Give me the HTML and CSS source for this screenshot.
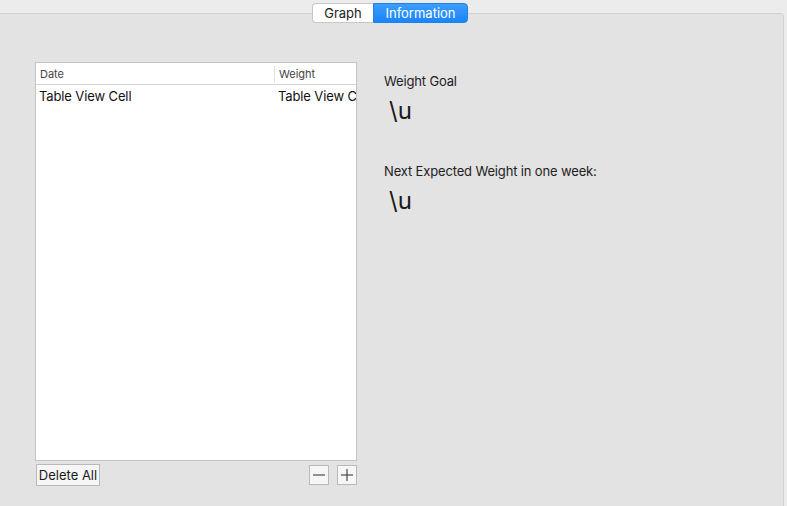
FILE: index.html
```html
<!DOCTYPE html>
<html>
<head>
<meta charset="utf-8">
<link rel="stylesheet" href="styles.css">
</head>
<body>
<div class="window">
  <div class="segmented">
    <div class="seg seg-off">Graph</div>
    <div class="seg seg-on">Information</div>
  </div>
  <div class="panel">
    <div class="left">
      <div class="table">
        <div class="thead">
          <div class="th th-date">Date</div>
          <div class="th th-weight">Weight</div>
        </div>
        <div class="row">
          <div class="td td-date">Table View Cell</div>
          <div class="td td-weight">Table View Cell</div>
        </div>
      </div>
      <div class="controls">
        <button class="btn delete">Delete All</button>
        <div class="pm">
          <button class="btn sq" aria-label="Remove"><svg width="12" height="12" viewBox="0 0 12 12"><line x1="0" y1="6" x2="12" y2="6" stroke="#2a2a2a" stroke-width="1"/></svg></button>
          <button class="btn sq" aria-label="Add"><svg width="12" height="12" viewBox="0 0 12 12"><line x1="0" y1="6" x2="12" y2="6" stroke="#2a2a2a" stroke-width="1"/><line x1="6" y1="0" x2="6" y2="12" stroke="#2a2a2a" stroke-width="1"/></svg></button>
        </div>
      </div>
    </div>
    <div class="right">
      <div class="label">Weight Goal</div>
      <div class="value">\u</div>
      <div class="label second">Next Expected Weight in one week:</div>
      <div class="value">\u</div>
    </div>
  </div>
</div>
</body>
</html>
```
FILE: styles.css
```css
html, body {
  margin: 0;
  padding: 0;
  background: #ececec;
  font-family: "Inter", "Liberation Sans", Arial, sans-serif;
  color: #1d1d1d;
}
.window {
  position: relative;
  width: 787px;
  height: 506px;
  overflow: hidden;
}
.segmented {
  position: absolute;
  top: 3px;
  left: 312px;
  display: flex;
  height: 20px;
  z-index: 2;
  font-size: 13px;
}
.seg {
  display: flex;
  align-items: center;
  justify-content: center;
  box-sizing: border-box;
  height: 20px;
}
.seg-off {
  width: 61px;
  background: #fff;
  border: 1px solid #c6c6c6;
  border-right: none;
  border-radius: 4px 0 0 4px;
  color: #222;
}
.seg-on {
  width: 95px;
  background: linear-gradient(#3c9dfb, #1a84fa);
  border: 1px solid #1b82f0;
  border-radius: 0 4px 4px 0;
  color: #fff;
}
.panel {
  margin-top: 13px;
  width: 784px;
  height: 493px;
  box-sizing: border-box;
  background: #e3e3e3;
  border-top: 1px solid #d0d0d0;
  border-right: 1px solid #d3d3d3;
  border-top-right-radius: 4px;
  display: flex;
  padding: 48px 0 0 35px;
  gap: 27px;
}
.left {
  width: 322px;
  display: flex;
  flex-direction: column;
}
.table {
  width: 322px;
  height: 399px;
  box-sizing: border-box;
  background: #fff;
  border: 1px solid #c4c4c4;
  overflow: hidden;
}
.thead {
  display: flex;
  height: 22px;
  box-sizing: border-box;
  border-bottom: 1px solid #d6d6d6;
  font-size: 11px;
  color: #444;
  align-items: center;
}
.th {
  box-sizing: border-box;
  white-space: nowrap;
}
.th-date {
  width: 239px;
  padding-left: 4px;
  height: 16px;
  line-height: 16px;
  border-right: 1px solid #dedede;
}
.th-weight {
  padding-left: 4px;
}
.row {
  display: flex;
  height: 21px;
  align-items: center;
  font-size: 13px;
  letter-spacing: -0.12px;
  color: #111;
  white-space: nowrap;
}
.td-date {
  width: 239px;
  padding-left: 3px;
  box-sizing: border-box;
}
.td-weight {
  padding-left: 3px;
  overflow: hidden;
  width: 81px;
  box-sizing: border-box;
}
.controls {
  display: flex;
  justify-content: space-between;
  align-items: flex-start;
  margin-top: 3px;
}
.btn {
  font-family: "Inter", "Liberation Sans", Arial, sans-serif;
  font-size: 13px;
  color: #1a1a1a;
  background: #f6f6f6;
  border: 1px solid #b9b9b9;
  padding: 0;
  margin: 0;
  box-sizing: border-box;
  border-radius: 0;
}
.delete {
  margin-left: 1px;
  width: 64px;
  height: 22px;
}
.pm {
  display: flex;
  gap: 8px;
  margin-top: 1px;
}
.sq {
  width: 20px;
  height: 20px;
  display: flex;
  align-items: center;
  justify-content: center;
}
.right {
  padding-top: 11px;
  display: flex;
  flex-direction: column;
}
.label {
  font-size: 13px;
  letter-spacing: -0.15px;
  color: #222;
  line-height: 16px;
}
.label.second {
  margin-top: 38px;
}
.value {
  font-size: 24px;
  line-height: 28px;
  margin-top: 8px;
  margin-left: 5px;
  color: #1a1a1a;
}
```
